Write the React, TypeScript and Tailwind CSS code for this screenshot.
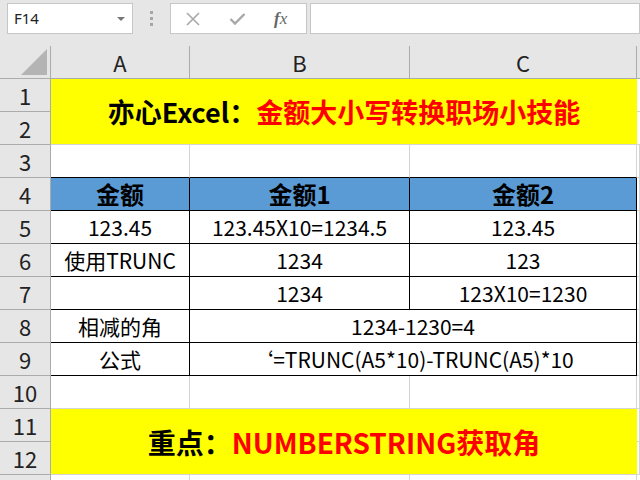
import type { ReactNode } from "react";

const font = "font-['DengXian','Noto_Sans_CJK_SC',sans-serif]";

type CellProps = {
    children?: ReactNode;
    className?: string;
};

const Cell = ({ children, className = "" }: CellProps) => (
    <div className={`flex items-center justify-center whitespace-nowrap leading-none ${className}`}>
        {children}
    </div>
);

const RowHead = ({ n, className = "" }: { n: number; className?: string }) => (
    <Cell className={`bg-[#e6e6e6] border-r border-b border-[#ababab] text-[22px] text-[#222] ${className}`}>
        {n}
    </Cell>
);

const grid = "border-r border-b border-[#d4d4d4]";
const boxed = "border-r border-b border-black";
const head = `bg-[#5b9bd5] ${boxed} text-[24px] font-bold`;
const body = `bg-white ${boxed} text-[21px]`;

export default function App() {
    return (
        <div className={`w-[640px] h-[480px] overflow-hidden bg-[#e6e6e6] ${font}`}>
            {/* formula bar */}
            <div className="flex items-start h-[46px] pt-[3px]">
                <div className="ml-[7px] w-[126px] h-[31px] bg-white border border-[#c6c6c6] flex items-center justify-between pl-[6px] pr-[7px]">
                    <span className="text-[15px] text-[#222] font-['Segoe_UI','Noto_Sans',sans-serif]">F14</span>
                    <span className="w-0 h-0 border-l-[4px] border-r-[4px] border-t-[4px] border-l-transparent border-r-transparent border-t-[#777]" />
                </div>
                <div className="w-[37px] h-[31px] flex flex-col items-center justify-center gap-[3px]">
                    <span className="w-[3px] h-[3px] bg-[#a6a6a6]" />
                    <span className="w-[3px] h-[3px] bg-[#a6a6a6]" />
                    <span className="w-[3px] h-[3px] bg-[#a6a6a6]" />
                </div>
                <div className="w-[137px] h-[31px] bg-white border border-[#c6c6c6] flex items-center pl-[14px] gap-[28px]">
                    <svg width="16" height="16" viewBox="0 0 16 16">
                        <path d="M2 2L14 14M14 2L2 14" stroke="#a8a8a8" strokeWidth="1.6" />
                    </svg>
                    <svg width="17" height="14" viewBox="0 0 17 14">
                        <path d="M1.5 7L6 11.5L15.5 2" stroke="#a8a8a8" strokeWidth="2.4" fill="none" />
                    </svg>
                    <span className="text-[17px] italic text-[#666] font-['Liberation_Serif',serif] leading-none">
                        <span className="font-bold">f</span>x
                    </span>
                </div>
                <div className="ml-[3px] flex-1 h-[31px] bg-white border border-[#c6c6c6]" />
            </div>

            {/* sheet */}
            <div className="grid grid-cols-[51px_139px_220px_227px_1fr] grid-rows-[33px_repeat(12,33px)_1fr] h-[434px]">
                {/* column headers */}
                <div className="relative border-r border-b border-[#ababab]">
                    <svg className="absolute left-[21px] top-[3px]" width="27" height="27" viewBox="0 0 27 27">
                        <path d="M26 0V26H0Z" fill="#b4b4b4" />
                    </svg>
                </div>
                <Cell className="border-r border-b border-[#ababab] text-[22px] text-[#222]">A</Cell>
                <Cell className="border-r border-b border-[#ababab] text-[22px] text-[#222]">B</Cell>
                <Cell className="border-r border-b border-[#ababab] text-[22px] text-[#222]">C</Cell>
                <Cell className="border-b border-[#ababab]" />

                {/* rows 1-2 */}
                <RowHead n={1} className="row-start-2 col-start-1" />
                <RowHead n={2} className="row-start-3 col-start-1" />
                <Cell className="row-start-2 row-span-2 col-start-2 col-span-3 bg-[#ffff00] border-b border-[#d4d4d4] text-[27px] font-bold">
                    <span className="text-black">亦心Excel：</span>
                    <span className="text-[#ff0000]">金额大小写转换职场小技能</span>
                </Cell>
                <Cell className="row-start-2 col-start-5 border-b border-[#d4d4d4] bg-white" />
                <Cell className="row-start-3 col-start-5 border-b border-[#d4d4d4] bg-white" />

                {/* row 3 */}
                <RowHead n={3} />
                <Cell className="bg-white border-r border-b border-r-[#d4d4d4] border-b-black" />
                <Cell className="bg-white border-r border-b border-r-[#d4d4d4] border-b-black" />
                <Cell className="bg-white border-r border-b border-r-[#d4d4d4] border-b-black" />
                <Cell className={`bg-white ${grid}`} />

                {/* row 4 */}
                <RowHead n={4} />
                <Cell className={head}>金额</Cell>
                <Cell className={head}>金额1</Cell>
                <Cell className={head}>金额2</Cell>
                <Cell className={`bg-white ${grid}`} />

                {/* row 5 */}
                <RowHead n={5} />
                <Cell className={body}>123.45</Cell>
                <Cell className={body}>123.45X10=1234.5</Cell>
                <Cell className={body}>123.45</Cell>
                <Cell className={`bg-white ${grid}`} />

                {/* row 6 */}
                <RowHead n={6} />
                <Cell className={body}>使用TRUNC</Cell>
                <Cell className={body}>1234</Cell>
                <Cell className={body}>123</Cell>
                <Cell className={`bg-white ${grid}`} />

                {/* row 7 */}
                <RowHead n={7} />
                <Cell className={body} />
                <Cell className={body}>1234</Cell>
                <Cell className={body}>123X10=1230</Cell>
                <Cell className={`bg-white ${grid}`} />

                {/* row 8 */}
                <RowHead n={8} />
                <Cell className={body}>相减的角</Cell>
                <Cell className={`col-span-2 ${body}`}>1234-1230=4</Cell>
                <Cell className={`bg-white ${grid}`} />

                {/* row 9 */}
                <RowHead n={9} />
                <Cell className={body}>公式</Cell>
                <Cell className={`col-span-2 ${body}`}>‘=TRUNC(A5*10)-TRUNC(A5)*10</Cell>
                <Cell className={`bg-white ${grid}`} />

                {/* row 10 */}
                <RowHead n={10} />
                <Cell className={`bg-white ${grid}`} />
                <Cell className={`bg-white ${grid}`} />
                <Cell className={`bg-white ${grid}`} />
                <Cell className={`bg-white ${grid}`} />

                {/* rows 11-12 */}
                <RowHead n={11} className="row-start-12 col-start-1" />
                <RowHead n={12} className="row-start-13 col-start-1" />
                <Cell className="row-start-12 row-span-2 col-start-2 col-span-3 bg-[#ffff00] border-b border-[#d4d4d4] text-[28px] font-bold">
                    <span className="text-black">重点：</span>
                    <span className="text-[#ff0000]">NUMBERSTRING获取角</span>
                </Cell>
                <Cell className={`row-start-12 col-start-5 bg-white ${grid}`} />
                <Cell className={`row-start-13 col-start-5 bg-white ${grid}`} />

                {/* row 13 (cut off) */}
                <div className="row-start-14 col-start-1 bg-[#e6e6e6] border-r border-[#ababab]" />
                <div className="row-start-14 col-start-2 bg-white border-r border-[#d4d4d4]" />
                <div className="row-start-14 col-start-3 bg-white border-r border-[#d4d4d4]" />
                <div className="row-start-14 col-start-4 bg-white border-r border-[#d4d4d4]" />
                <div className="row-start-14 col-start-5 bg-white" />
            </div>
        </div>
    );
}
